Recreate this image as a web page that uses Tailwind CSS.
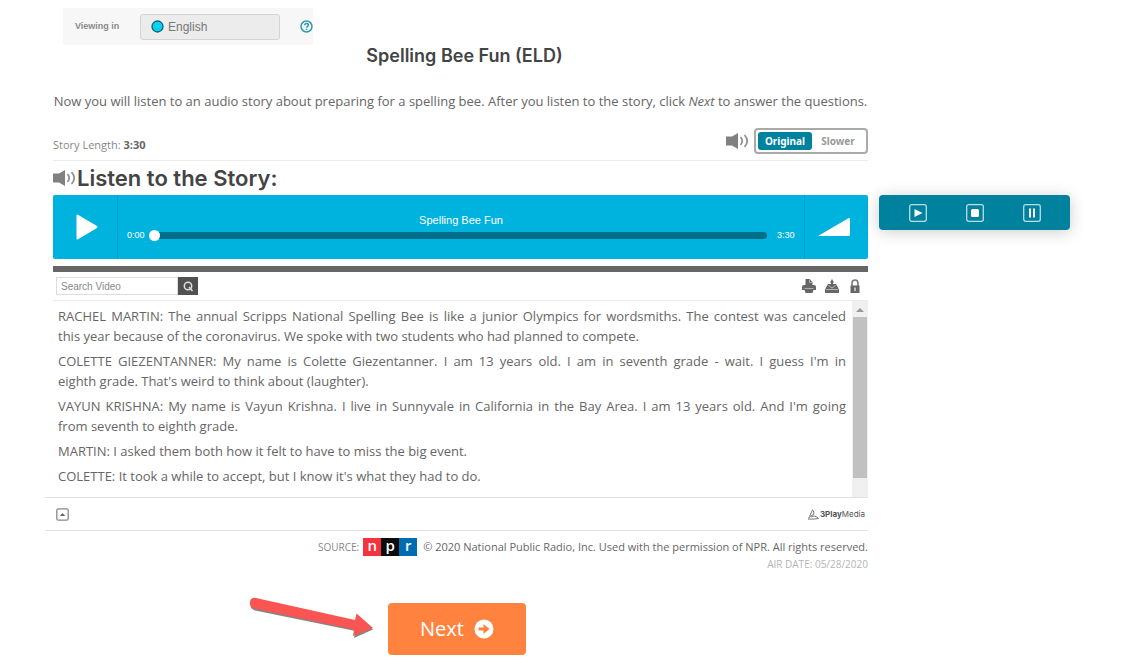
<!DOCTYPE html>
<html lang="en">
<head>
<meta charset="utf-8">
<meta name="viewport" content="width=device-width, initial-scale=1">
<title>Spelling Bee Fun (ELD)</title>
<script src="https://cdn.jsdelivr.net/npm/@tailwindcss/browser@4"></script>
</head>
<body class="bg-white font-['Open_Sans',sans-serif] text-[#666]">
<div class="flex items-start gap-[11px] pt-2 pr-[51px] pl-[53px]">
  <main class="min-w-0 flex-1">
    <div class="ml-[10px] flex h-[37px] w-[250px] items-center bg-[#f7f7f7] pl-3 font-['Liberation_Sans',sans-serif]">
      <span class="w-[65px] text-[9px] font-bold text-[#8a8a8a]">Viewing in</span>
      <button type="button" class="flex h-[26px] w-[140px] items-center gap-1 rounded-[3px] border border-[#d4d4d4] bg-[#ececec] pl-[10px] text-[12px] text-[#777]">
        <svg class="size-[13px]" viewBox="0 0 13 13" aria-hidden="true"><circle cx="6.500" cy="6.500" r="5.500" fill="#00d4f5" stroke="#1f5f6b" stroke-width="1.300"/></svg>
        English
      </button>
      <button type="button" aria-label="Help" class="ml-5">
        <svg class="size-[13px]" viewBox="0 0 13 13" fill="none" stroke="#2f9bb0" stroke-width="1.500" aria-hidden="true"><circle cx="6.500" cy="6.500" r="5.500"/><path d="M4.700 5.200c0-2.400 3.700-2.300 3.700-.1 0 1.300-1.800 1.300-1.800 2.600M6.600 8.700v1.200"/></svg>
      </button>
    </div>

    <h1 class="pl-2 text-center font-[Inter,sans-serif] text-[18px] leading-[22px] font-semibold text-[#444]">Spelling Bee Fun (ELD)</h1>
    <p class="mt-6 text-center text-[13px] leading-5 whitespace-nowrap">Now you will listen to an audio story about preparing for a spelling bee. After you listen to the story, click <em>Next</em> to answer the questions.</p>

    <div class="mt-[17px] flex h-[33px] items-start justify-between border-b border-[#ececec]">
      <p class="pt-[7px] text-[11px] leading-5 text-[#888]">Story Length: <b class="text-[#666]">3:30</b></p>
      <div class="flex items-center gap-1">
        <svg class="h-4 w-6" viewBox="0 0 24 16" aria-hidden="true"><path fill="#808080" d="M0 3.500h6L12 0v16l-6-3.500H0z"/><path d="M14.500 4q3.500 4 0 8M18.500 2q5.500 6 0 12" fill="none" stroke="#929292" stroke-width="1.800"/></svg>
        <div class="flex h-[26px] w-[114px] rounded-[4px] border-2 border-[#aaa] p-[2px] font-['Noto_Sans',sans-serif] text-[10px] font-bold">
          <button type="button" class="w-[54px] rounded-[3px] bg-[#00829f] text-white">Original</button>
          <button type="button" class="flex-1 text-[#999]">Slower</button>
        </div>
      </div>
    </div>

    <div class="flex h-[34px] items-center">
      <svg class="h-4 w-6" viewBox="0 0 24 16" aria-hidden="true"><path fill="#808080" d="M0 3.500h6L12 0v16l-6-3.500H0z"/><path d="M14.500 4q3.500 4 0 8M18.500 2q5.500 6 0 12" fill="none" stroke="#929292" stroke-width="1.800"/></svg>
      <h2 class="font-[Inter,sans-serif] text-[22px] leading-8 font-semibold text-[#444]">Listen to the Story:</h2>
    </div>

    <section aria-label="Audio player" class="flex h-16 rounded-[2px] bg-[#00b2de] font-['Liberation_Sans',sans-serif] text-white">
      <button type="button" aria-label="Play" class="flex w-[65px] items-center justify-center border-r border-[#009dca] pl-1">
        <svg class="h-[26px] w-[22px]" viewBox="0 0 22 26" fill="#fff" aria-hidden="true"><path d="M.5 1.500Q.5 0 2 .8L21 12q1 1 0 2L2 25.200Q.5 26 .5 24.500z"/></svg>
      </button>
      <div class="flex flex-1 flex-col pt-[18px] pr-[9px] pl-[9px]">
        <p class="text-center text-[11px] leading-[15px]">Spelling Bee Fun</p>
        <div class="flex h-[15px] items-center text-[9px]">
          <span class="w-[22px]">0:00</span>
          <div class="flex h-[7px] flex-1 items-center rounded-full bg-[#006f8c]"><span class="size-[11px] rounded-full bg-white"></span></div>
          <span class="ml-[10px] w-[18px]">3:30</span>
        </div>
      </div>
      <button type="button" aria-label="Volume" class="flex w-16 items-center justify-center border-l border-[#009dca] pr-[6px]">
        <svg class="h-[18px] w-8" viewBox="0 0 32 18" fill="#fff" aria-hidden="true"><path d="M0 18 30 .5Q32-.5 32 1v15.500q0 1.500-1.500 1.500z"/></svg>
      </button>
    </section>

    <div class="mt-[7px] h-[6px] bg-[#666]"></div>
    <div class="flex h-[29px] items-center justify-between border-b border-[#ececec] pr-[6px] pl-[3px]">
      <form class="flex font-['Liberation_Sans',sans-serif]" onsubmit="return false">
        <input type="search" aria-label="Search Video" placeholder="Search Video" class="h-[18px] w-[122px] border border-[#ddd] px-1 text-[10px] placeholder:text-[#888]">
        <button type="submit" aria-label="Search" class="flex h-[18px] w-5 items-center justify-center bg-[#505050]">
          <svg class="size-[11px]" viewBox="0 0 11 11" fill="none" stroke="#ddd" stroke-width="1.500" aria-hidden="true"><circle cx="5" cy="5" r="3.700"/><path d="m6 6 3.500 4"/></svg>
        </button>
      </form>
      <div class="flex items-center gap-[9px] text-[#666]">
        <button type="button" aria-label="Print"><svg class="size-[14px]" viewBox="0 0 14 14" fill="currentColor" aria-hidden="true"><path d="M3.500 0h4L10.500 3v3H12q2 0 2 2v3h-2.500l-1 3h-7l-1-3H0V8q0-2 2-2h1.500z"/><path d="M2.500 9.500h9M7.500 1v2.500H10" stroke="#ccc" stroke-width=".7" fill="none"/></svg></button>
        <button type="button" aria-label="Download"><svg class="size-[14px]" viewBox="0 0 14 14" fill="currentColor" aria-hidden="true"><path d="M7 0l2 3.500H8V5h3l3 5.500V14H0v-3.500L3 5h3V3.500H5z"/><path d="M1 10.500h12M3.500 6.500 7 9l3.500-2.500" stroke="#ccc" stroke-width=".8" fill="none"/></svg></button>
        <button type="button" aria-label="Lock"><svg class="size-[14px]" viewBox="0 0 14 14" aria-hidden="true"><path d="M4 7V4.500q0-3.500 3-3.500t3 3.500V7" fill="none" stroke="#777" stroke-width="1.600"/><path fill="#666" d="M2.500 6.500h9V14h-9z"/><path d="M7 8.500v3.500" stroke="#ddd" stroke-width="1.500"/></svg></button>
      </div>
    </div>

    <div class="flex h-[196px]">
      <div class="min-w-0 flex-1 space-y-[5px] pt-[5px] pr-[6px] pl-[5px] text-justify text-[13px] leading-5">
        <p>RACHEL MARTIN: The annual Scripps National Spelling Bee is like a junior Olympics for wordsmiths. The contest was canceled this&nbsp;year because of the coronavirus. We spoke with two students who had planned to compete.</p>
        <p>COLETTE GIEZENTANNER: My name is Colette Giezentanner. I am 13 years old. I am in seventh grade - wait. I guess I'm in eighth&nbsp;grade. That's weird to think about (laughter).</p>
        <p>VAYUN KRISHNA: My name is Vayun Krishna. I live in Sunnyvale in California in the Bay Area. I am 13 years old. And I'm going from&nbsp;seventh to eighth grade.</p>
        <p>MARTIN: I asked them both how it felt to have to miss the big event.</p>
        <p>COLETTE: It took a while to accept, but I know it's what they had to do.</p>
      </div>
      <div class="flex w-4 flex-col items-center bg-[#f0f0f0]" aria-hidden="true">
        <svg class="h-4 w-2" viewBox="0 0 8 16"><path d="m0 11 4-4 4 4z" fill="#999"/></svg>
        <div class="h-[161px] w-[14px] bg-[#c1c1c1]"></div>
      </div>
    </div>

    <div class="-ml-2 flex h-[34px] items-center justify-between border-y border-[#e2e2e2] pr-[3px] pl-[11px]">
      <button type="button" aria-label="Collapse transcript"><svg class="size-[13px]" viewBox="0 0 13 13" aria-hidden="true"><rect x=".8" y=".8" width="11.400" height="11.400" rx="1.500" fill="none" stroke="#888" stroke-width="1.300"/><path d="m3.800 8 2.700-3 2.700 3z" fill="#666"/></svg></button>
      <a href="#" class="flex items-center gap-px font-[Inter,sans-serif] text-[8px] text-[#555]"><svg class="h-[11px] w-3" viewBox="0 0 12 11" fill="none" stroke="#777" aria-hidden="true"><path d="M2.500 7.500 5.500.8q2 2.200 1.200 4.700Q4.500 6 1 9.500M4 8q4-2.500 7.500 1.500-5 1-10.500.5" /></svg><span><b>3Play</b>Media</span></a>
    </div>

    <footer class="pt-[6px] text-right">
      <p class="flex items-center justify-end text-[11px] leading-5 whitespace-nowrap">
        <span class="mr-1 text-[10px] text-[#888]">SOURCE:</span>
        <span class="mr-[6px] grid h-[18px] w-[54px] grid-cols-3 text-center text-[15px] leading-[15px] font-semibold text-white"><span class="bg-[#f5333f]">n</span><span class="bg-[#0c0c0c]">p</span><span class="bg-[#006db3]">r</span></span>
        © 2020 National Public Radio, Inc. Used with the permission of NPR. All rights reserved.
      </p>
      <p class="text-[10px] leading-[14px] text-[#b5b5b5]">AIR DATE: 05/28/2020</p>
    </footer>

    <div class="mt-8 flex items-start justify-center pr-[146px]">
      <svg class="mt-[-7px] mr-[11px] h-[44px] w-[128px]" viewBox="0 0 128 44" aria-hidden="true">
        <path fill="#444" opacity=".65" d="M7 4.500 107 26l1-6 16 13.500-19 8.500 1.500-7L6 14.500Q0 12 2 7.500T7 4.500z"/>
        <path fill="#fb5553" d="M7 2 106 24l1.500-6.500L124 32l-20 8 1-6.500L5 12.500Q0 10 1 5.500T7 2z"/>
      </svg>
      <button type="button" class="flex h-[52px] w-[138px] items-center justify-center gap-[10px] rounded-[4px] bg-[#ff823f] text-[20px] text-white">
        Next
        <svg class="size-5" viewBox="0 0 20 20" aria-hidden="true"><circle cx="10" cy="10" r="9.500" fill="#fff"/><path fill="#ff823f" d="M4.500 8.500h5V5l6 5-6 5v-3.500h-5z"/></svg>
      </button>
    </div>
  </main>

  <aside aria-label="Read aloud controls" class="mt-[187px] flex h-[35px] w-[191px] shrink-0 items-center justify-center gap-[39px] rounded-[4px] bg-[#00829f] shadow-[0_2px_16px_rgba(0,0,0,0.2)]">
    <button type="button" aria-label="Play"><svg class="size-[18px]" viewBox="0 0 18 18" aria-hidden="true"><rect x=".7" y=".7" width="16.600" height="16.600" rx="2" fill="none" stroke="#b9dde5" stroke-width="1.300"/><path fill="#fff" d="m5.500 5 8 4-8 4z"/></svg></button>
    <button type="button" aria-label="Stop"><svg class="size-[18px]" viewBox="0 0 18 18" aria-hidden="true"><rect x=".7" y=".7" width="16.600" height="16.600" rx="2" fill="none" stroke="#b9dde5" stroke-width="1.300"/><rect x="5" y="5" width="8" height="8" rx="1.500" fill="#fff"/></svg></button>
    <button type="button" aria-label="Pause"><svg class="size-[18px]" viewBox="0 0 18 18" aria-hidden="true"><rect x=".7" y=".7" width="16.600" height="16.600" rx="2" fill="none" stroke="#b9dde5" stroke-width="1.300"/><path stroke="#fff" stroke-width="2" d="M7 4.500v9M11 4.500v9"/></svg></button>
  </aside>
</div>
</body>
</html>
